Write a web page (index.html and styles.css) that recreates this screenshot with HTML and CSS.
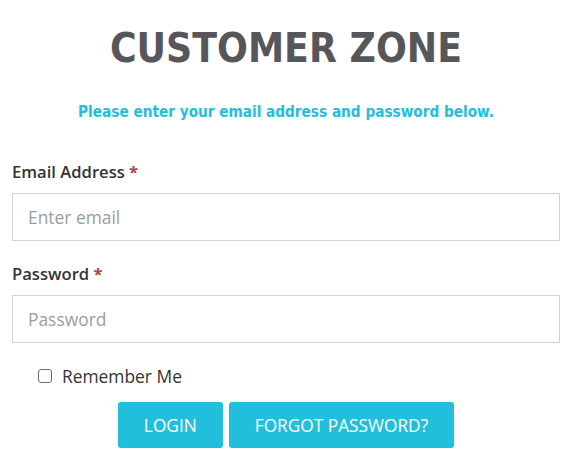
FILE: index.html
```html
<!DOCTYPE html>
<html lang="en">
<head>
<meta charset="utf-8">
<title>Customer Zone</title>
<link rel="stylesheet" href="styles.css">
</head>
<body>
<main class="zone">
  <h1 class="title">CUSTOMER ZONE</h1>
  <p class="intro">Please enter your email address and password below.</p>
  <form class="form">
    <div class="field">
      <label class="label" for="email">Email Address <span class="req">*</span></label>
      <input class="input" id="email" type="email" placeholder="Enter email">
    </div>
    <div class="field">
      <label class="label" for="pw">Password <span class="req">*</span></label>
      <input class="input" id="pw" type="password" placeholder="Password">
    </div>
    <label class="remember"><span class="box"></span>Remember Me</label>
    <div class="actions">
      <button class="btn" type="button">LOGIN</button>
      <button class="btn" type="button">FORGOT PASSWORD?</button>
    </div>
  </form>
</main>
</body>
</html>
```
FILE: styles.css
```css
html, body {
  margin: 0;
  padding: 0;
  background: #ffffff;
}
body {
  font-family: "Open Sans", "Liberation Sans", sans-serif;
  color: #333333;
}
.zone {
  padding: 21px 13px 0 12px;
}
.title {
  margin: 0;
  text-align: center;
  font-family: "DejaVu Sans Condensed", "DejaVu Sans", sans-serif;
  font-weight: bold;
  font-size: 40.4px;
  line-height: 54px;
  color: #57565b;
}
.intro {
  margin: 26px 0 0;
  text-align: center;
  font-family: "DejaVu Sans Condensed", "DejaVu Sans", sans-serif;
  font-weight: bold;
  font-size: 15.2px;
  line-height: 22px;
  color: #22bede;
}
.form {
  margin-top: 37px;
}
.field {
  display: flex;
  flex-direction: column;
  margin-bottom: 21px;
}
.label {
  font-size: 16.6px;
  font-weight: 600;
  line-height: 24px;
  color: #333333;
  margin-bottom: 9px;
}
.req {
  color: #a94442;
  font-weight: bold;
}
.input {
  box-sizing: border-box;
  height: 48px;
  width: 100%;
  border: 1px solid #cdd1d6;
  border-radius: 0;
  padding: 0 15px;
  font-family: "Open Sans", sans-serif;
  font-size: 17.4px;
  color: #333;
  outline: none;
}
.input::placeholder {
  color: #999da3;
}
.remember {
  display: flex;
  align-items: center;
  gap: 10px;
  margin: 7px 0 0 26px;
  font-size: 17.4px;
  color: #333333;
  line-height: 24px;
}
.box {
  box-sizing: border-box;
  width: 14px;
  height: 14px;
  border: 1.5px solid #6b6b6b;
  border-radius: 3px;
}
.actions {
  display: flex;
  justify-content: center;
  gap: 6px;
  margin-top: 14px;
}
.btn {
  height: 46px;
  padding: 0 26px;
  border: 0;
  border-radius: 3px;
  background: #22bfdd;
  color: #ffffff;
  font-family: "Open Sans", sans-serif;
  font-size: 17.3px;
}
```
